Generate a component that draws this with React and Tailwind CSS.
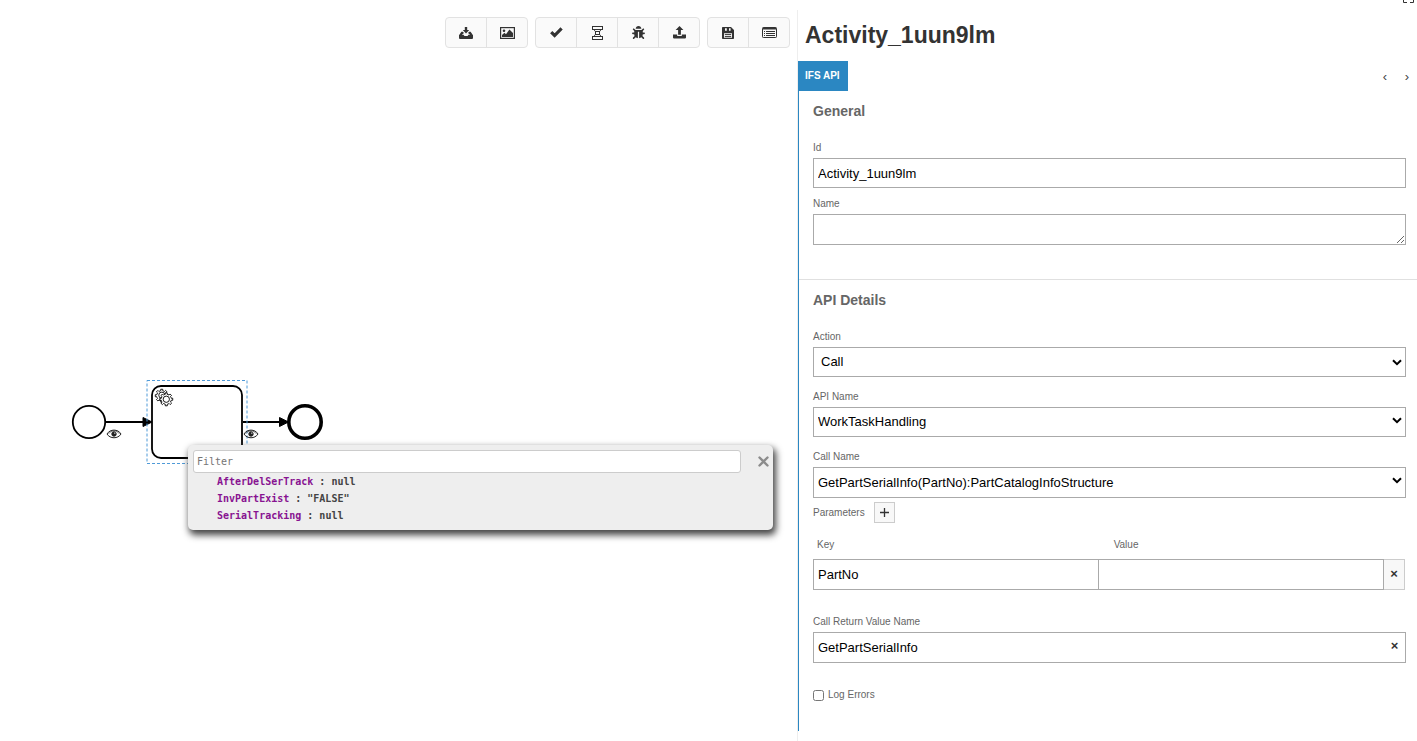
import { useState } from 'react'
import { FaBug } from 'react-icons/fa'

const GEAR =
  'v -1.71335 c 0.352326,-0.0705 0.703932,-0.17838 1.047628,-0.32133 0.344416,-0.14465 0.665822,-0.32133 0.966377,-0.52145 l 1.19431,1.18005 1.567487,-1.57688 -1.195028,-1.18014 c 0.403376,-0.61394 0.683079,-1.29908 0.825447,-2.01824 l 1.622133,-0.01 v -2.2196 l -1.636514,0.01 c -0.07333,-0.35153 -0.178319,-0.70024 -0.323564,-1.04372 -0.145244,-0.34406 -0.321407,-0.6644 -0.522735,-0.96217 l 1.131035,-1.13631 -1.583305,-1.56293 -1.129598,1.13589 c -0.614052,-0.40108 -1.302883,-0.68093 -2.022633,-0.82247 l 0.0093,-1.61852 h -2.241173 l 0.0042,1.63124 c -0.353763,0.0736 -0.705369,0.17977 -1.049785,0.32371 -0.344415,0.14437 -0.665102,0.32092 -0.9635006,0.52006 l -1.1698628,-1.15823 -1.5667691,1.5792 1.1684265,1.15669 c -0.4026573,0.61283 -0.68308,1.29797 -0.8247287,2.01713 l -1.6588041,0.003 v 2.22174 l 1.6724648,-0.006 c 0.073327,0.35077 0.1797598,0.70243 0.3242851,1.04472 0.1452428,0.34448 0.3214064,0.6644 0.5227339,0.96066 l -1.1993431,1.19723 1.5840256,1.56011 1.1964668,-1.19348 c 0.6140517,0.40346 1.3028827,0.68232 2.0233517,0.82331 l 7.19e-4,1.69892 h 2.226848 z'

const VARIABLES = [
  { name: 'AfterDelSerTrack', value: 'null' },
  { name: 'InvPartExist', value: '"FALSE"' },
  { name: 'SerialTracking', value: 'null' },
]

const icons = {
  download: (
    <svg width="14" height="12" viewBox="0 0 14 12" fill="currentColor">
      <path d="M5.8 0h2.4v3h2L7 6.4 3.8 3h2z" />
      <path d="M2.4 4.8h1.4L5 6 2.8 7.8h1.8l.8 1.3h3.2l.8-1.3h1.8L9 6l1.2-1.2h1.4L14 8.2V11a1 1 0 0 1-1 1H1a1 1 0 0 1-1-1V8.2z" />
    </svg>
  ),
  image: (
    <svg width="15" height="12" viewBox="0 0 15 12">
      <rect x="0.6" y="0.6" width="13.8" height="10.8" fill="none" stroke="currentColor" strokeWidth="1.2" />
      <circle cx="4" cy="3.7" r="1.3" fill="currentColor" />
      <path d="M2 10V8l2.4-2.2L6 7.2 9.4 2.6 13 6v4z" fill="currentColor" />
    </svg>
  ),
  check: (
    <svg width="13" height="11" viewBox="0 0 13 11" fill="none" stroke="currentColor" strokeWidth="3.2">
      <path d="M1.2 5.2 4.6 8.5 11.6 1.4" />
    </svg>
  ),
  distribute: (
    <svg width="11" height="14" viewBox="0 0 11 14" fill="none" stroke="currentColor">
      <rect x="0.5" y="0.5" width="10" height="3" />
      <rect x="3.5" y="5.5" width="4" height="3" />
      <rect x="0.5" y="10.5" width="10" height="3" />
      <path d="M2.5 3.5v1.2L4 5.8M8.5 3.5v1.2L7 5.8M4 8.2 2.5 9.3v1.2M7 8.2l1.5 1.1v1.2" />
    </svg>
  ),
  bug: <FaBug size={13} />,
  upload: (
    <svg width="13" height="13" viewBox="0 0 13 13" fill="currentColor">
      <path d="M6.5 0 10.4 4H7.9v4.8H5.1V4H2.6z" />
      <path d="M0 8.6h4.2v1.3h4.6V8.6H13v3a.8.8 0 0 1-.8.8H.8a.8.8 0 0 1-.8-.8z" />
    </svg>
  ),
  save: (
    <svg width="12" height="12" viewBox="0 0 12 12">
      <path d="M.8 0H9l3 3v8.2a.8.8 0 0 1-.8.8H.8a.8.8 0 0 1-.8-.8V.8A.8.8 0 0 1 .8 0z" fill="currentColor" />
      <path d="M3 1.2h1.8v2.6H3zM7 1.2h1.6v2.6H7zM2 6.2h8v4.6H2z" fill="#fafafa" />
      <path d="M2.8 7.6h6.4M2.8 9.6h6.4" stroke="currentColor" />
    </svg>
  ),
  list: (
    <svg width="15" height="11" viewBox="0 0 15 11" stroke="currentColor">
      <rect x="0.5" y="0.5" width="14" height="10" rx="0.8" fill="none" />
      <path d="M1 1.5h13" strokeWidth="2" />
      <path d="M4 4.5h9M4 6.5h9M4 8.5h9M2 4.5h1M2 6.5h1M2 8.5h1" />
    </svg>
  ),
}

const TOOLBAR = [
  [
    { icon: 'download', title: 'Download diagram' },
    { icon: 'image', title: 'Download image' },
  ],
  [
    { icon: 'check', title: 'Validate' },
    { icon: 'distribute', title: 'Distribute' },
    { icon: 'bug', title: 'Debug' },
    { icon: 'upload', title: 'Deploy' },
  ],
  [
    { icon: 'save', title: 'Save' },
    { icon: 'list', title: 'Properties' },
  ],
]

function Toolbar() {
  return (
    <div className="flex justify-end gap-[7px] pt-[17px] pr-[7px]">
      {TOOLBAR.map((group, i) => (
        <div key={i} className="flex divide-x divide-[#e2e2e2] overflow-hidden rounded border border-[#e2e2e2] bg-[#fafafa]">
          {group.map(({ icon, title }) => (
            <button
              key={icon}
              type="button"
              aria-label={title}
              className="box-content flex h-[29px] w-10 items-center justify-center text-[#333] hover:bg-gray-100"
            >
              {icons[icon]}
            </button>
          ))}
        </div>
      ))}
    </div>
  )
}

function Eye({ x, y }) {
  return (
    <g transform={`translate(${x} ${y})`} fill="none" stroke="#222">
      <path d="M-7 0C-4-5.2 4-5.2 7 0 4 5-4 5-7 0z" />
      <path d="M-5.4-.2C-3-4 3-4 5.4-.2" strokeWidth="0.6" />
      <circle r="2.2" fill="#222" />
      <circle cx="0.8" cy="-0.9" r="0.7" fill="#fff" stroke="none" />
    </g>
  )
}

function Diagram() {
  return (
    <svg className="absolute top-0 left-0" width="340" height="480" viewBox="0 0 340 480" fill="none" stroke="#000">
      <circle cx="89" cy="422" r="16.2" strokeWidth="1.8" />
      <path d="M106 422h38M243 422h38" strokeWidth="1.8" />
      <rect x="152" y="386" width="90" height="72" rx="9" strokeWidth="1.8" fill="#fff" />
      <path d="M143 417.5v9l9-4.5zM279.5 417.5v9l9-4.5z" fill="#000" />
      <g transform="translate(152 386) scale(0.9)" strokeWidth="1" fill="#fff">
        <path d={`M12 18 ${GEAR}`} />
        <circle cx="10.9" cy="10.2" r="3.4" />
        <path d={`M17 22 ${GEAR}`} />
        <circle cx="15.9" cy="14.7" r="3.5" />
      </g>
      <circle cx="305" cy="422" r="16.2" strokeWidth="3.6" />
      <rect x="147" y="380.5" width="100" height="83" stroke="#4f9ad8" strokeDasharray="3 2" />
      <Eye x={114} y={434} />
      <Eye x={251} y={434} />
    </svg>
  )
}

function VariablesPopup() {
  const [filter, setFilter] = useState('')
  const rows = VARIABLES.filter((v) => v.name.toLowerCase().includes(filter.toLowerCase()))

  return (
    <div className="absolute top-[445px] left-[188px] w-[585px] rounded-[5px] bg-[#eee] pt-[5px] pb-[6px] pl-[5px] font-['DejaVu_Sans_Mono',monospace] text-[10px] text-[#444] shadow-[2px_4px_7px_1px_#444]">
      <div className="flex items-center">
        <input
          type="text"
          aria-label="Filter"
          placeholder="Filter"
          value={filter}
          onChange={(e) => setFilter(e.target.value)}
          className="h-[23px] min-w-0 flex-1 rounded-[3px] border border-[#ccc] bg-white px-[3px] outline-none placeholder:text-[#757575]"
        />
        <button type="button" aria-label="Close" className="flex w-8 justify-end pr-1 text-[#8c8c8c]">
          <svg width="11" height="11" viewBox="0 0 11 11" stroke="currentColor" strokeWidth="2.4" strokeLinecap="round">
            <path d="m1.5 1.5 8 8M9.5 1.5l-8 8" />
          </svg>
        </button>
      </div>
      <ul className="pl-6 leading-[17px] font-bold">
        {rows.map((v) => (
          <li key={v.name}>
            <span className="text-[#881391]">{v.name}</span> : {v.value}
          </li>
        ))}
      </ul>
    </div>
  )
}

const fieldClass = 'block w-full border border-[#aaa] bg-white text-[13px] text-black outline-none'
const labelClass = 'block text-[10px] leading-4 text-[#666]'
const thClass = 'pb-[6px] text-left text-[10px] leading-4 font-normal text-[#666]'

function SelectField({ id, label, options, className, chevron }) {
  return (
    <div>
      <label htmlFor={id} className={`${labelClass} mb-[2px]`}>{label}</label>
      <div className="relative">
        <select id={id} className={`${fieldClass} appearance-none pr-6 ${className}`}>
          {options.map((o) => (
            <option key={o}>{o}</option>
          ))}
        </select>
        <svg
          className={`pointer-events-none absolute right-1 ${chevron}`}
          width="10"
          height="7"
          viewBox="0 0 10 7"
          fill="none"
          stroke="#000"
          strokeWidth="2"
        >
          <path d="m1 1.2 4 4 4-4" />
        </svg>
      </div>
    </div>
  )
}

function PropertiesPanel() {
  return (
    <aside className="mt-[10px] w-[620px] shrink-0 border-l border-[#eee] pt-[11px]">
      <h1 className="mb-3 pl-[7px] text-[23px] leading-7 font-bold text-[#333]">Activity_1uun9lm</h1>

      <div className="flex items-center justify-between">
        <a href="#ifs-api" className="bg-[#2b87c2] pr-2 pl-[7px] text-[10px] leading-[30px] font-bold text-white">
          IFS API
        </a>
        <div className="flex gap-4 pt-px pr-[7px] text-[13px] text-[#444]">
          <button type="button" aria-label="Previous tab" className="w-[6px]">‹</button>
          <button type="button" aria-label="Next tab" className="w-[6px]">›</button>
        </div>
      </div>

      <div id="ifs-api" className="border-l border-[#2b87c2]">
        {/* General */}
        <section className="border-b border-[#e0e0e0] pt-[10px] pr-[11px] pb-[34px] pl-[14px]">
          <h2 className="mb-[19px] text-[14px] leading-5 font-bold text-[#666]">General</h2>
          <label htmlFor="id" className={`${labelClass} mb-[2px]`}>Id</label>
          <input id="id" type="text" defaultValue="Activity_1uun9lm" className={`${fieldClass} h-[30px] px-1`} />
          <label htmlFor="name" className={`${labelClass} mt-2 mb-[2px]`}>Name</label>
          <textarea id="name" rows={1} className={`${fieldClass} h-[31px] resize px-1`} />
        </section>

        {/* API Details */}
        <section className="pt-[10px] pr-[11px] pb-7 pl-[14px]">
          <h2 className="mb-[19px] text-[14px] leading-5 font-bold text-[#666]">API Details</h2>
          <div className="flex flex-col gap-3">
            <SelectField id="action" label="Action" options={['Call']} className="h-[30px] pl-[7px]" chevron="top-3" />
            <SelectField id="api" label="API Name" options={['WorkTaskHandling']} className="h-[30px] pl-1" chevron="top-[10px]" />
            <SelectField
              id="call"
              label="Call Name"
              options={['GetPartSerialInfo(PartNo):PartCatalogInfoStructure']}
              className="h-[31px] pl-1"
              chevron="top-[10px]"
            />
          </div>

          <div className="mt-1 flex items-center gap-[9px]">
            <span className={`${labelClass} pt-px`}>Parameters</span>
            <button
              type="button"
              aria-label="Add parameter"
              className="flex size-[21px] items-center justify-center border border-[#ccc] bg-[#f8f8f8] text-[#333]"
            >
              <svg width="9" height="9" viewBox="0 0 9 9" stroke="currentColor" strokeWidth="1.3">
                <path d="M4.5 0v9M0 4.5h9" />
              </svg>
            </button>
          </div>

          <table className="mt-[14px] mb-6 w-full table-fixed">
            <thead>
              <tr>
                <th id="param-key" className={`${thClass} w-[48%] pl-1`}>Key</th>
                <th id="param-value" className={`${thClass} pl-4`}>Value</th>
                <th className="w-[22px] p-0" />
              </tr>
            </thead>
            <tbody>
              <tr>
                <td className="p-0">
                  <input type="text" aria-labelledby="param-key" defaultValue="PartNo" className={`${fieldClass} h-[31px] border-r-0 px-1`} />
                </td>
                <td className="p-0">
                  <input type="text" aria-labelledby="param-value" className={`${fieldClass} h-[31px] px-1`} />
                </td>
                <td className="p-0 pr-px">
                  <button
                    type="button"
                    aria-label="Remove parameter"
                    className="block h-[31px] w-full border border-l-0 border-[#ccc] bg-[#f8f8f8] pb-[2px] text-[13px] font-bold text-[#333]"
                  >
                    ×
                  </button>
                </td>
              </tr>
            </tbody>
          </table>

          <label htmlFor="return-name" className={`${labelClass} mb-[2px]`}>Call Return Value Name</label>
          <div className="flex h-[31px] border border-[#aaa]">
            <input
              id="return-name"
              type="text"
              defaultValue="GetPartSerialInfo"
              className="min-w-0 flex-1 px-1 text-[13px] text-black outline-none"
            />
            <button type="button" aria-label="Clear" className="w-[21px] pb-1 text-[13px] font-bold text-[#333]">×</button>
          </div>

          <div className="mt-6 flex items-center gap-1">
            <input id="log-errors" type="checkbox" className="size-[11px]" />
            <label htmlFor="log-errors" className={labelClass}>Log Errors</label>
          </div>
        </section>
      </div>
    </aside>
  )
}

export default function App() {
  return (
    <div className="relative flex min-h-screen bg-white font-['Liberation_Sans',Arial,sans-serif]">
      <main className="relative min-w-0 flex-1">
        <Toolbar />
        <Diagram />
        <VariablesPopup />
      </main>
      <PropertiesPanel />
      <button type="button" aria-label="Toggle fullscreen" className="absolute top-0 right-[3px]">
        <svg className="block" width="11" height="4" viewBox="0 0 11 4" fill="none" stroke="#333">
          <path d="M.5 0v2.5H4M10.5 0v2.5H7" />
        </svg>
      </button>
    </div>
  )
}
